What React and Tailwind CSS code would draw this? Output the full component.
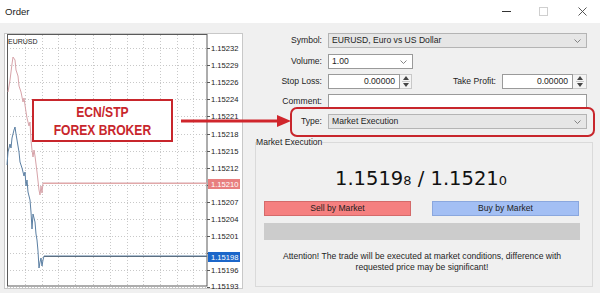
import React from "react";

const priceLabels = [
  "1.15232", "1.15229", "1.15226", "1.15224", "1.15221", "1.15218", "1.15215",
  "1.15212", "1.15210", "1.15207", "1.15204", "1.15201", "1.15198", "1.15196", "1.15193",
];

const pink = [
  [8, 92], [10, 80], [12, 64], [13, 57], [15, 60], [16, 70], [18, 76], [19, 86], [21, 92],
  [23, 102], [24, 98], [26, 112], [27, 118], [29, 126], [30, 122], [31, 140], [32, 150],
  [33, 157], [34, 150], [35, 156], [37, 172], [39, 190], [40, 195], [41, 186], [42, 193],
  [43, 183], [207, 183],
];

const blue = [
  [7, 165], [8, 152], [10, 144], [11, 148], [12, 138], [14, 130], [15, 127], [16, 134],
  [18, 146], [19, 152], [20, 162], [22, 168], [24, 176], [25, 172], [26, 186], [27, 180],
  [28, 192], [30, 200], [31, 212], [32, 229], [33, 214], [35, 222], [36, 234], [37, 240],
  [38, 251], [39, 268], [40, 262], [41, 258], [42, 266], [43, 260], [44, 256], [207, 256],
];

function Chart() {
  const vx = [25, 42, 58, 75, 93, 110, 127, 143, 160, 177, 193];
  return (
    <div className="w-[239px] h-[256px] shrink-0">
      <svg width="239" height="256" viewBox="4 33 239 256" className="block">
        <rect x="4" y="33" width="239" height="256" fill="#ffffff" />
        <rect x="4.5" y="33.5" width="238" height="255" fill="none" stroke="#c8c8c8" />
        {vx.map((x) => (
          <line key={x} x1={x + 0.5} y1="35" x2={x + 0.5} y2="286" stroke="#c8c8c8" strokeDasharray="1 2" />
        ))}
        {priceLabels.map((p, i) => {
          const y = Math.round(48 + i * 17.1) + 0.5;
          return (
            <line key={p} x1="7" y1={y} x2="207" y2={y} stroke="#c8c8c8" strokeDasharray="1 2" />
          );
        })}
        <rect x="7.5" y="34.5" width="199.5" height="251.5" fill="none" stroke="#5a5a5a" />
        {priceLabels.map((p, i) => {
          const y = Math.round(48 + i * 17.1) + 0.5;
          if (i === 12) {
            return <line key={p + "t"} x1="207" y1={y} x2="210" y2={y} stroke="#5a5a5a" />;
          }
          const ty = i === 14 ? 288.5 : y + 2.8;
          return (
            <g key={p + "t"}>
              <line x1="207" y1={y} x2="210" y2={y} stroke="#5a5a5a" />
              <text x="211" y={ty} fontSize="7.6" fill="#222" fontFamily="Liberation Sans, Arial, sans-serif">
                {p}
              </text>
            </g>
          );
        })}
        <polyline points={pink.map((p) => p.join(",")).join(" ")} fill="none" stroke="#d7a3a9" strokeWidth="1" />
        <polyline points={blue.map((p) => p.join(",")).join(" ")} fill="none" stroke="#5b7fa3" strokeWidth="1" />
        <line x1="43" y1="183.5" x2="207" y2="183.5" stroke="#e2a8a8" />
        <line x1="44" y1="256.5" x2="207" y2="256.5" stroke="#5b6e80" />
        <rect x="208" y="179" width="32" height="10" fill="#e87f7f" />
        <text x="211" y="186.8" fontSize="7.6" fill="#ffffff" fontFamily="Liberation Sans, Arial, sans-serif">1.15210</text>
        <rect x="208" y="252" width="32" height="10" fill="#1b66c9" />
        <text x="211" y="259.8" fontSize="7.6" fill="#ffffff" fontFamily="Liberation Sans, Arial, sans-serif">1.15198</text>
        <text x="8" y="43.5" fontSize="7" fill="#222" fontFamily="Liberation Sans, Arial, sans-serif">EURUSD</text>
      </svg>
    </div>
  );
}

function Chevron() {
  return (
    <svg width="7" height="4" viewBox="0 0 7 4" className="block">
      <polyline points="0.5,0.5 3.5,3.5 6.5,0.5" fill="none" stroke="#777" strokeWidth="0.9" />
    </svg>
  );
}

function Select({ value, width, white }) {
  return (
    <div
      className={`h-[15px] border flex items-center justify-between pl-[3px] pr-[5px] ${
        white ? "bg-white border-[#9a9a9a]" : "bg-[#e6e6e6] border-[#b4b4b4]"
      } ${width}`}
    >
      <span>{value}</span>
      <Chevron />
    </div>
  );
}

function Spin({ w }) {
  return (
    <div className={`h-[15px] ${w} flex flex-col items-center justify-center gap-[1px] border border-l-0 border-[#c8c8c8] bg-[#f4f4f4]`}>
      <svg width="6" height="4" viewBox="0 0 6 4" className="block">
        <polygon points="0,4 3,0 6,4" fill="#444" />
      </svg>
      <div className="w-[8px] h-px bg-[#c8c8c8]" />
      <svg width="6" height="4" viewBox="0 0 6 4" className="block">
        <polygon points="0,0 3,4 6,0" fill="#444" />
      </svg>
    </div>
  );
}

function NumInput({ w }) {
  return (
    <div className={`h-[15px] ${w} bg-white border border-[#9a9a9a] flex items-center justify-end pr-[4px]`}>
      0.00000
    </div>
  );
}

function Label({ children, w = "w-[85px]" }) {
  return <div className={`${w} text-right pr-[6px] shrink-0`}>{children}</div>;
}

export default function App() {
  return (
    <div className="w-[600px] h-[293px] relative overflow-hidden bg-[#f0f0f0] text-[#1e1e1e] font-['Liberation_Sans',Arial,sans-serif] text-[8.6px] leading-none">
      {/* title bar */}
      <div className="h-[23px] bg-white flex items-center justify-between pl-[5px] pr-[13px]">
        <span className="text-[9.6px] text-[#222]">Order</span>
        <div className="flex items-center">
          <div className="w-[9px] h-px bg-[#333] mr-[28px]" />
          <div className="w-[9px] h-[9px] border border-[#cfcfcf] mr-[30px]" />
          <svg width="9" height="9" viewBox="0 0 9 9" className="block">
            <line x1="0.5" y1="0.5" x2="8.5" y2="8.5" stroke="#444" strokeWidth="0.9" />
            <line x1="8.5" y1="0.5" x2="0.5" y2="8.5" stroke="#444" strokeWidth="0.9" />
          </svg>
        </div>
      </div>

      {/* body */}
      <div className="flex pt-[10px] pl-[4px]">
        <Chart />
        <div className="flex-1 flex flex-col">
          <div className="flex items-center h-[15px]">
            <Label>Symbol:</Label>
            <Select value="EURUSD, Euro vs US Dollar" width="w-[259px]" />
          </div>
          <div className="flex items-center h-[15px] mt-[6px]">
            <Label>Volume:</Label>
            <Select value="1.00" width="w-[85px]" white />
          </div>
          <div className="flex items-center h-[15px] mt-[5px]">
            <Label>Stop Loss:</Label>
            <NumInput w="w-[72px]" />
            <Spin w="w-[12px]" />
            <Label w="w-[90px]">Take Profit:</Label>
            <NumInput w="w-[71px]" />
            <Spin w="w-[14px]" />
          </div>
          <div className="flex items-center h-[15px] mt-[5px]">
            <Label>Comment:</Label>
            <div className="h-[15px] w-[259px] bg-white border border-[#9a9a9a]" />
          </div>
          <div className="flex items-center h-[15px] mt-[5px]">
            <Label>Type:</Label>
            <Select value="Market Execution" width="w-[259px]" />
          </div>

          <fieldset className="ml-[12px] w-[338px] h-[150px] mt-[8px] border border-[#dadada] px-0">
            <legend className="px-0 ml-0 leading-[10px]">Market Execution</legend>
            <div className="h-[24px] mt-[17px] flex items-end justify-center font-['DejaVu_Sans',sans-serif] text-[#111] pr-[6px]">
              <span className="text-[19.5px] leading-none">1.1519</span>
              <span className="text-[13px] leading-none mb-[1px]">8</span>
              <span className="text-[19.5px] leading-none">&nbsp;/ 1.1521</span>
              <span className="text-[13px] leading-none mb-[1px]">0</span>
            </div>
            <div className="flex mt-[13px] ml-[8px] gap-[21px]">
              <div className="w-[147px] h-[15px] bg-[#f58080] border border-[#d46a6a] flex items-center justify-center text-[#1e1e1e]">
                Sell by Market
              </div>
              <div className="w-[147px] h-[15px] bg-[#a3bff4] border border-[#8aa7de] flex items-center justify-center text-[#1e1e1e]">
                Buy by Market
              </div>
            </div>
            <div className="ml-[8px] mt-[7px] w-[316px] h-[17px] bg-[#cccccc]" />
            <div className="mt-[11px] text-center leading-[10.5px] pr-[4px]">
              <div>Attention! The trade will be executed at market conditions, difference with</div>
              <div>requested price may be significant!</div>
            </div>
          </fieldset>
        </div>
      </div>

      {/* annotation: ECN/STP box */}
      <div className="absolute left-[32px] top-[99px] w-[141px] h-[43px] bg-white border-2 border-[#c8262c] flex items-center justify-center">
        <div className="scale-x-[0.78] flex flex-col items-center font-['Liberation_Sans',sans-serif] font-bold text-[#c8262c] text-[15.5px] leading-[18px]">
          <div>ECN/STP</div>
          <div>FOREX BROKER</div>
        </div>
      </div>

      {/* annotation: arrow */}
      <svg className="absolute left-[180px] top-[114px]" width="112" height="14" viewBox="0 0 112 14">
        <rect x="1" y="5.5" width="98" height="3" fill="#d0262c" />
        <polygon points="97,1 111,7 97,13" fill="#d0262c" />
      </svg>

      {/* annotation: highlight around Type */}
      <div className="absolute left-[290px] top-[107px] w-[305px] h-[30px] border-2 border-[#c8262c] rounded-[7px]" />
    </div>
  );
}
